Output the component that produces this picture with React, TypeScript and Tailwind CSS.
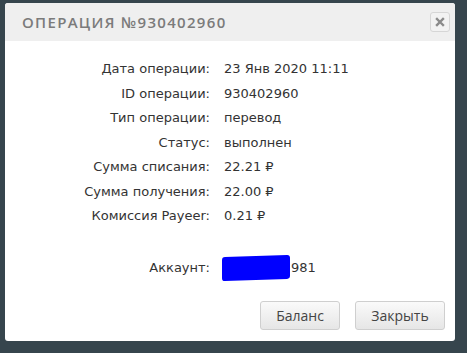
import React from 'react';

const rows: [string, string][] = [
  ['Дата операции:', '23 Янв 2020 11:11'],
  ['ID операции:', '930402960'],
  ['Тип операции:', 'перевод'],
  ['Статус:', 'выполнен'],
  ['Сумма списания:', '22.21 ₽'],
  ['Сумма получения:', '22.00 ₽'],
  ['Комиссия Payeer:', '0.21 ₽'],
];

const App: React.FC = () => {
  return (
    <div className="w-[467px] h-[353px] bg-[#36454d] pt-[3px] pl-[5px] overflow-hidden">
      <div className="w-[450px] h-[338px] bg-white rounded-[3px] flex flex-col overflow-hidden">
        <div className="h-[38px] bg-[#efefef] flex items-center justify-between pl-[17px] pr-[5px]">
          <span
            className="text-[15px] font-semibold tracking-[1.3px] text-[#7b7b7b]"
            style={{ fontFamily: '"Open Sans", sans-serif' }}
          >
            ОПЕРАЦИЯ №930402960
          </span>
          <button className="w-[20px] h-[20px] border border-[#d6d6d6] rounded-[3px] flex items-center justify-center bg-[#f2f2f2]">
            <svg width="10" height="10" viewBox="0 0 10 10">
              <path d="M2 2 L8 8 M8 2 L2 8" stroke="#8a8a8a" strokeWidth="2.4" strokeLinecap="square" />
            </svg>
          </button>
        </div>

        <div
          className="flex-1 text-[13px] text-[#333]"
          style={{ fontFamily: '"DejaVu Sans", sans-serif' }}
        >
          <div className="grid grid-cols-[205px_auto] gap-x-[14px] gap-y-[7px] pt-[19px] leading-[17.5px]">
            {rows.map(([label, value]) => (
              <React.Fragment key={label}>
                <div className="text-right">{label}</div>
                <div>{value}</div>
              </React.Fragment>
            ))}
          </div>

          <div className="grid grid-cols-[205px_auto] gap-x-[14px] mt-[34px] leading-[17.5px]">
            <div className="text-right">Аккаунт:</div>
            <div className="relative">
              <span className="pl-[67px]">981</span>
              <div className="absolute left-[-2px] top-[-3px] w-[68px] h-[24px] bg-[#0000ff] rounded-[3px] -skew-y-2" />
            </div>
          </div>
        </div>

        <div
          className="flex justify-end gap-[15px] pr-[10px] pb-[11px]"
          style={{ fontFamily: '"Open Sans", sans-serif' }}
        >
          <button className="w-[80px] h-[29px] rounded-[3px] border border-[#cfcfcf] bg-gradient-to-b from-[#fafafa] to-[#e6e6e6] text-[14px] text-[#444]">
            Баланс
          </button>
          <button className="w-[90px] h-[29px] rounded-[3px] border border-[#cfcfcf] bg-gradient-to-b from-[#fafafa] to-[#e6e6e6] text-[14px] text-[#444]">
            Закрыть
          </button>
        </div>
      </div>
    </div>
  );
};

export default App;
